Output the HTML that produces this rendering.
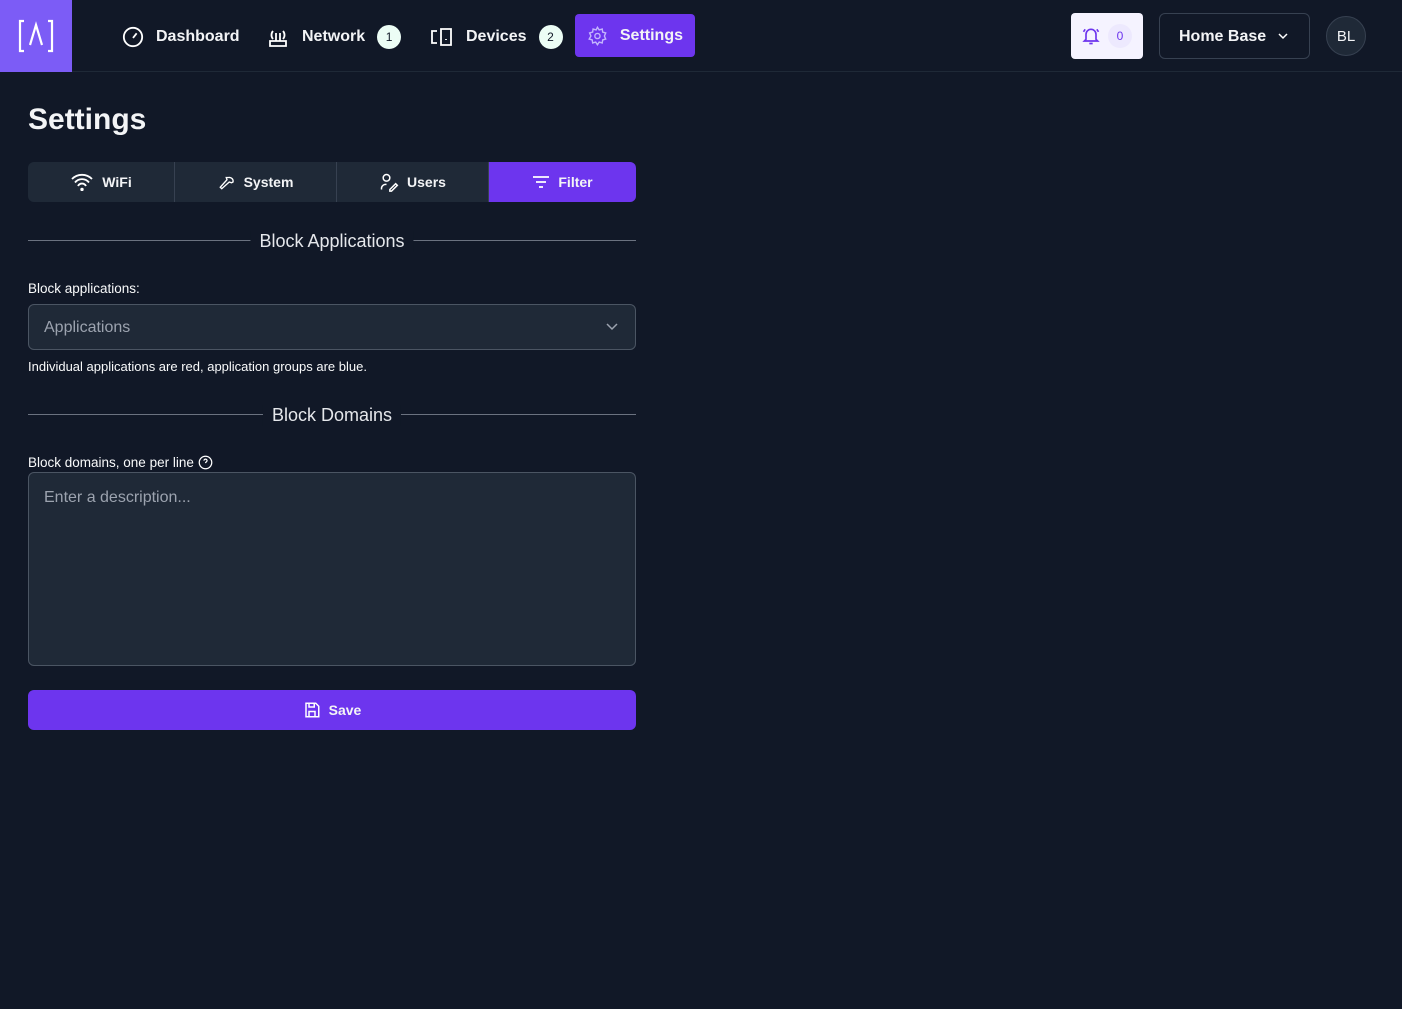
<!DOCTYPE html>
<html><head><meta charset="utf-8"><style>
*{box-sizing:border-box;margin:0;padding:0}
body{width:1402px;height:1009px;background:#111827;font-family:"Liberation Sans",sans-serif;color:#f3f4f6;position:relative;overflow:hidden}
.top{position:absolute;left:0;top:0;width:1402px;height:72px;border-bottom:1px solid #1f2937}
.logo{position:absolute;left:0;top:0;width:72px;height:72px;background:#7c5cf6}
.nav{position:absolute;top:15px;height:43px;display:flex;align-items:center;font-size:16px;font-weight:bold;color:#f3f4f6}
.nav svg{margin-right:12px}
.badge{display:inline-flex;width:24px;height:24px;border-radius:50%;background:#ecfdf5;color:#111827;font-size:12px;font-weight:normal;align-items:center;justify-content:center;margin-left:12px}
.sett{background:#6d35ee;border-radius:4px;padding:0 12px;left:575px;width:120px;top:14px}
.bell{position:absolute;left:1071px;top:13px;width:72px;height:46px;background:#f5f3ff;border-radius:4px}
.home{position:absolute;left:1159px;top:13px;width:151px;height:46px;border:1px solid #374151;border-radius:6px;font-size:16px;font-weight:bold;padding:14px 0 0 19px}
.av{position:absolute;left:1326px;top:16px;width:40px;height:40px;border-radius:50%;background:#1f2937;border:1px solid #374151;font-size:15px;text-align:center;line-height:40px}
h1{position:absolute;left:28px;top:103px;font-size:30px;font-weight:bold}
.tabs{position:absolute;left:28px;top:162px;width:608px;height:40px;background:#1f2937;border-radius:6px;display:flex;overflow:hidden;font-size:14px;font-weight:bold}
.tabs div{display:flex;align-items:center;justify-content:center;gap:8px;border-right:1px solid #374151}
.div{position:absolute;left:28px;width:608px;height:1px;background:#6b7280}
.div span{position:absolute;top:-9px;background:#111827;padding:0 9px;font-size:18px;color:#e5e7eb;left:50%;transform:translateX(-50%);white-space:nowrap}
.lbl{position:absolute;left:28px;font-size:13.5px;color:#f9fafb}
.inp{position:absolute;left:28px;width:608px;background:#1f2937;border:1px solid #4b5563;border-radius:6px;color:#9ca3af;font-size:16px;padding:0 15px}
.save{position:absolute;left:28px;top:690px;width:608px;height:40px;background:#6d35ee;border-radius:6px;display:flex;align-items:center;justify-content:center;gap:8px;font-size:14px;font-weight:bold}
</style></head><body>
<div class="top">
<div class="logo"><svg width="72" height="72" viewBox="0 0 72 72" fill="none" stroke="#fff" stroke-width="2.2"><path d="M24 21h-4v30h4M48 21h4v30h-4M30 45l6-20 6 20"/></svg></div>
<div class="nav" style="left:122px"><svg width="22" height="22" viewBox="0 0 24 24" fill="none" stroke="#fff" stroke-width="2"><circle cx="12" cy="12" r="10"/><path d="M12 13l4-5"/></svg>Dashboard</div>
<div class="nav" style="left:266px"><svg width="24" height="24" viewBox="0 0 24 24" fill="none" stroke="#fff" stroke-width="1.8"><path d="M4 16h16v5H4zM10 16V8M14 16V8M7 6a6 6 0 000 8M17 6a6 6 0 010 8"/></svg>Network<span class="badge">1</span></div>
<div class="nav" style="left:430px"><svg width="24" height="24" viewBox="0 0 24 24" fill="none" stroke="#fff" stroke-width="1.8"><path d="M7 6H2v12h5M11 4h10v16H11zM16 14v1"/></svg>Devices<span class="badge">2</span></div>
<div class="nav sett"><svg width="22" height="22" viewBox="0 0 24 24" fill="none" stroke="#c4b5fd" stroke-width="1.6"><circle cx="12" cy="12" r="3"/><path d="M12 2l2 3 3.5-1 .5 3.5 3.5 1-1.5 3.5 1.5 3.5-3.5 1-.5 3.5-3.5-1-2 3-2-3-3.5 1-.5-3.5-3.5-1L4.5 12 3 8.5l3.5-1L7 4l3.5 1z"/></svg>Settings</div>
<div class="bell"><svg style="position:absolute;left:10px;top:13px" width="20" height="20" viewBox="0 0 24 24" fill="none" stroke="#6d35ee" stroke-width="2"><path d="M6 16V10a6 6 0 0112 0v6l2 2H4zM10 21h4M3 7l2-3M21 7l-2-3"/></svg><div style="position:absolute;left:37px;top:11px;width:24px;height:24px;border-radius:50%;background:#ede9fe;color:#6d35ee;font-size:12px;text-align:center;line-height:24px">0</div></div>
<div class="home">Home Base<svg style="position:absolute;left:118px;top:18px" width="10" height="8" viewBox="0 0 10 8" fill="none" stroke="#fff" stroke-width="1.5"><path d="M1 2l4 4 4-4"/></svg></div>
<div class="av">BL</div>
</div>
<h1>Settings</h1>
<div class="tabs">
<div style="width:147px"><svg width="24" height="18" viewBox="0 0 24 18" fill="none" stroke="#fff" stroke-width="1.8"><path d="M2 6a14 14 0 0120 0M5 9.5a9 9 0 0114 0M8 13a4.5 4.5 0 018 0"/><circle cx="12" cy="16.5" r=".8" fill="#fff"/></svg>WiFi</div>
<div style="width:162px"><svg width="18" height="18" viewBox="0 0 24 24" fill="none" stroke="#fff" stroke-width="1.8"><path d="M14 6a5 5 0 016 6l-2 1-3-1-10 9-2-2 9-10-1-3z"/></svg>System</div>
<div style="width:152px"><svg width="20" height="20" viewBox="0 0 24 24" fill="none" stroke="#fff" stroke-width="1.8"><circle cx="9" cy="7" r="4"/><path d="M3 21v-2a5 5 0 016-4M13 21l7-7 2 2-7 7h-2z"/></svg>Users</div>
<div style="flex:1;background:#6d35ee;border:none"><svg width="18" height="14" viewBox="0 0 18 14" fill="none" stroke="#fff" stroke-width="1.8"><path d="M1 2h16M4 7h10M7 12h4"/></svg>Filter</div>
</div>
<div class="div" style="top:240px"><span>Block Applications</span></div>
<div class="lbl" style="top:281px">Block applications:</div>
<div class="inp" style="top:304px;height:46px;line-height:45px">Applications<svg style="position:absolute;right:17px;top:18px" width="12" height="8" viewBox="0 0 12 8" fill="none" stroke="#9ca3af" stroke-width="1.5"><path d="M1 1l5 5 5-5"/></svg></div>
<div class="lbl" style="top:359px;font-size:13px">Individual applications are red, application groups are blue.</div>
<div class="div" style="top:414px"><span>Block Domains</span></div>
<div class="lbl" style="top:455px">Block domains, one per line <svg style="vertical-align:-3px" width="15" height="15" viewBox="0 0 24 24" fill="none" stroke="#fff" stroke-width="2"><circle cx="12" cy="12" r="10"/><path d="M9.5 9a2.5 2.5 0 115 0c0 2-2.5 2-2.5 4M12 17h.01"/></svg></div>
<div class="inp" style="top:472px;height:194px;padding-top:16px">Enter a description...</div>
<div class="save"><svg width="18" height="18" viewBox="0 0 24 24" fill="none" stroke="#fff" stroke-width="2"><path d="M4 3h13l4 4v14H4zM8 3v5h7V3M8 21v-7h8v7"/></svg>Save</div>
</body></html>
